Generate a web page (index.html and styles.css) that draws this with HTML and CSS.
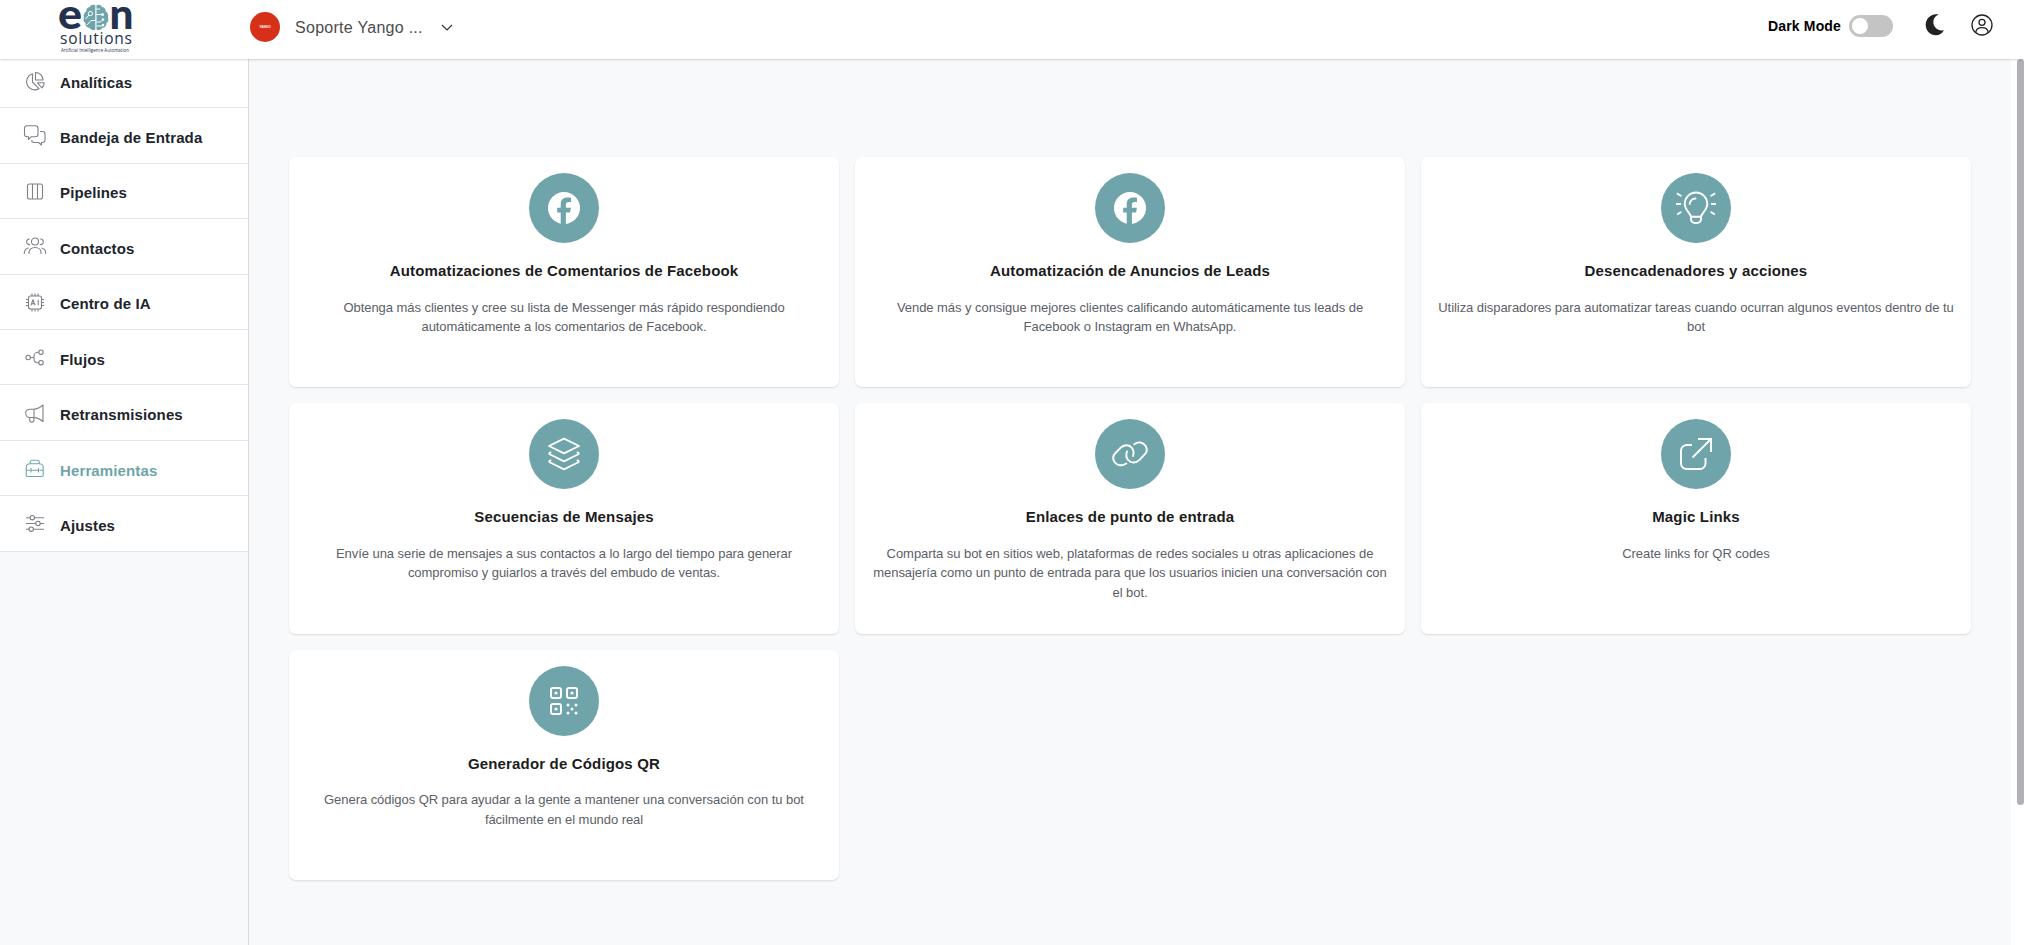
FILE: index.html
```html
<!DOCTYPE html>
<html lang="es">
<head>
<meta charset="utf-8">
<title>Herramientas</title>
<link rel="stylesheet" href="styles.css">
</head>
<body>
<div class="app">
  <header class="topbar">
    <div class="brand">
      <svg class="logo" viewBox="0 0 78 58">
        <text class="logo-name" x="0" y="29" textLength="24" lengthAdjust="spacingAndGlyphs">e</text>
        <text class="logo-name" x="51.500" y="29" textLength="24" lengthAdjust="spacingAndGlyphs">n</text>
        <g transform="translate(25 4)"><path d="M12.300 1.200C10 .2 7.500 1 6.800 3 4.300 3.200 3 5.200 3.300 7.200 1 8.500.2 11 1 13c-1 2.500-.5 5 1.500 6.300C2.300 22 4.300 24 6.800 24c1.200 2.200 3.700 2.500 5.500 1.500zM13.500 1.200C15.800.2 18.200 1 19 3c2.500.2 3.900 2.200 3.600 4.200 2.200 1.300 3.200 3.800 2.300 5.800 1 2.500.6 5-1.500 6.300.2 2.700-1.800 4.700-4.300 4.700-1.200 2.200-3.800 2.500-5.600 1.500z" fill="#6fa4aa"/><g fill="none" stroke="#fff" stroke-width="1"><circle cx="7.500" cy="9.500" r="2.100"/><path d="M6 11l-3.500 4M12.500 16.500H8L4 21M13.500 10.500h5M13.500 5H17M13.500 18h4l2-2M13.500 22h6"/></g><g fill="#fff"><circle cx="19.500" cy="10.500" r="1.500"/><circle cx="20" cy="15.500" r="1.300"/><circle cx="20" cy="21" r="1.300"/></g></g>
        <text class="logo-sub" x="2" y="43.500" textLength="72">solutions</text>
        <text class="logo-tag" x="3" y="52" textLength="68">Artificial Intelligence Automation</text>
      </svg>
    </div>
    <div class="account">
      <span class="avatar">YANGO</span>
      <span class="account-name">Soporte Yango ...</span>
      <svg class="chev" viewBox="0 0 12 7"><path d="M1 1l5 5 5-5" fill="none" stroke="#333" stroke-width="1.200"/></svg>
    </div>
    <div class="actions">
      <span class="dark-label">Dark Mode</span>
      <span class="switch"><span class="knob"></span></span>
      <svg class="moon" viewBox="0 0 20 22"><path d="M13.800.5C8 2.500 7 9 10 13c2 2.800 5.300 4 9 3.200C17 19.500 14 21.200 11 21.200 5.200 21.200.7 16.700.7 11S5 .5 11 .3c1 0 2 0 2.800.2z" fill="#222"/></svg>
      <svg class="user" viewBox="0 0 22 22" fill="none" stroke="#222" stroke-width="1.300"><circle cx="11" cy="11" r="10"/><circle cx="11" cy="8.300" r="3"/><path d="M4.800 18.500c.3-3 2.500-4.800 6.200-4.800s5.900 1.800 6.200 4.800"/></svg>
    </div>
  </header>
  <div class="body">
    <nav class="sidebar">
      <a class="item"><svg viewBox="0 0 24 24"><path d="M9.500 3.800A8.200 8.200 0 1 0 16 18.700L9.500 12zM12.500 2.500v7.500H20a7.600 7.600 0 0 0-7.500-7.500zM14.500 12.800h6.700c-.1 2-.9 3.900-2.300 5.200z"/></svg><span>Analíticas</span></a>
      <a class="item"><svg viewBox="0 0 24 24"><path d="M4 1.700h8.500a2.500 2.500 0 0 1 2.500 2.500v6a2.500 2.500 0 0 1-2.500 2.500H8.300L5.500 15.500v-2.800H4a2.500 2.500 0 0 1-2.500-2.500v-6A2.500 2.500 0 0 1 4 1.700zM17 7.500h2.500A2.500 2.500 0 0 1 22 10v6a2.500 2.500 0 0 1-2.500 2.500h-1v2.500l-3-2.500H11A2.500 2.500 0 0 1 8.700 16"/></svg><span>Bandeja de Entrada</span></a>
      <a class="item"><svg viewBox="0 0 24 24"><rect x="4.500" y="4" width="15" height="15" rx="2"/><path d="M9.500 4v15M14.500 4v15"/></svg><span>Pipelines</span></a>
      <a class="item"><svg viewBox="0 0 24 24"><circle cx="12" cy="6.500" r="3.500"/><path d="M6 19v-1.500c0-3 2.500-5 6-5s6 2 6 5V19M6.800 4a2.800 2.800 0 1 0 .3 5.500M17.200 4a2.800 2.800 0 1 1-.3 5.500M1.200 19c0-3 1.300-5.500 4.300-6M22.800 19c0-3-1.300-5.500-4.300-6"/></svg><span>Contactos</span></a>
      <a class="item"><svg viewBox="0 0 24 24"><g transform="translate(.5 0)"><rect x="5" y="5" width="13" height="13" rx="2"/><path d="M8.500 2.500V5M11.500 2.500V5M14.500 2.500V5M8.500 18v2.500M11.500 18v2.500M14.500 18v2.500M2.500 8.500H5M2.500 11.500H5M2.500 14.500H5M18 8.500h2.500M18 11.500h2.500M18 14.500h2.500M7.500 14.300l2-5.600 2 5.600M8.200 12.700h2.600M14.700 8.700v5.600"/></g></svg><span>Centro de IA</span></a>
      <a class="item"><svg viewBox="0 0 24 24"><g transform="translate(.5 0)"><circle cx="4.700" cy="11.500" r="2.200"/><circle cx="17.500" cy="6.200" r="2.200"/><circle cx="17.500" cy="16.700" r="2.200"/><path d="M7 11.500h3.500M15.300 6.200h-1a3.800 3.800 0 0 0-3.800 3.800v3a3.800 3.800 0 0 0 3.800 3.700h1"/></g></svg><span>Flujos</span></a>
      <a class="item"><svg viewBox="0 0 24 24"><g transform="translate(.5 0)"><path d="M19.500 3v16.500C16.500 17 13.500 15.600 10 15.500H6.300a4 4 0 0 1 0-8.300H10C13.500 7 16.500 5.800 19.500 3zM10.500 7.200v8.300M6.200 15.500V18a2.100 2.100 0 0 0 4.200 0v-2.500"/></g></svg><span>Retransmisiones</span></a>
      <a class="item active"><svg viewBox="0 0 24 24"><g transform="translate(.5 0)"><path d="M2.700 18V10.500C2.700 8.200 4.500 6.700 6.500 6.700h9.300c2 0 3.900 1.500 3.900 3.800V18a1.500 1.500 0 0 1-1.500 1.500H4.200A1.500 1.500 0 0 1 2.700 18zM6.700 6.700V5.200A2 2 0 0 1 8.700 3.200h5.100a2 2 0 0 1 2 2v1.500M2.700 13.200h4M8 13.200h6.500M16 13.200h3.700M7.500 11v4.500M15 11v4.500"/></g></svg><span>Herramientas</span></a>
      <a class="item"><svg viewBox="0 0 24 24"><g transform="translate(.5 0)"><path d="M2.500 5.700h4M11 5.700h9.500M2.500 11.500h9.700M16.700 11.500h3.800M2.500 17.200h3M10 17.200h10.500"/><circle cx="8.800" cy="5.700" r="2.200"/><circle cx="14.500" cy="11.500" r="2.200"/><circle cx="7.700" cy="17.200" r="2.200"/></g></svg><span>Ajustes</span></a>
    </nav>
    <main class="content">
      <article class="card"><span class="disc"><svg viewBox="0 0 40 40"><circle cx="20" cy="20" r="16" fill="#fff"/><path d="M16.700 37V24.600h-3.500v-4.800h3.500v-3.500c0-4.600 2.400-6.900 6.600-6.900 1.500 0 2.700.1 3.700.3v4.200h-2.300c-2 0-2.800 1-2.800 2.900v3h5l-.8 4.800h-4.200V37z" fill="#6fa4aa"/></svg></span><h2>Automatizaciones de Comentarios de Facebook</h2><p>Obtenga más clientes y cree su lista de Messenger más rápido respondiendo automáticamente a los comentarios de Facebook.</p></article>
      <article class="card"><span class="disc"><svg viewBox="0 0 40 40"><circle cx="20" cy="20" r="16" fill="#fff"/><path d="M16.700 37V24.600h-3.500v-4.800h3.500v-3.500c0-4.600 2.400-6.900 6.600-6.900 1.500 0 2.700.1 3.700.3v4.200h-2.300c-2 0-2.800 1-2.800 2.900v3h5l-.8 4.800h-4.200V37z" fill="#6fa4aa"/></svg></span><h2>Automatización de Anuncios de Leads</h2><p>Vende más y consigue mejores clientes calificando automáticamente tus leads de Facebook o Instagram en WhatsApp.</p></article>
      <article class="card"><span class="disc"><svg viewBox="0 0 40 40" class="line"><path d="M15 28.800c0-3.200-6.300-6.500-6.300-13a11.300 11.300 0 0 1 22.600 0c0 6.500-6.300 9.800-6.300 13M15 28.800h10V31a4 4 0 0 1-4 4h-2a4 4 0 0 1-4-4zM13.700 16a6 6 0 0 1 5.800-5.500M1.500 5.800l3.200 2M.8 16h3.400M1.800 26l3-1.800M38.500 5.800l-3.200 2M39.200 16h-3.400M38.200 26l-3-1.800"/></svg></span><h2>Desencadenadores y acciones</h2><p>Utiliza disparadores para automatizar tareas cuando ocurran algunos eventos dentro de tu bot</p></article>
      <article class="card"><span class="disc"><svg viewBox="0 0 40 40" class="line"><path d="M20 4.700L35 12 20 19.300 5 12zM6.500 18.300c-1.500.7-1.700 1.500-.3 2.200L20 27.300l13.800-6.800c1.400-.7 1.200-1.500-.3-2.200M6.500 26.300c-1.500.7-1.700 1.500-.3 2.200L20 35.300l13.800-6.800c1.400-.7 1.200-1.500-.3-2.200"/></svg></span><h2>Secuencias de Mensajes</h2><p>Envíe una serie de mensajes a sus contactos a lo largo del tiempo para generar compromiso y guiarlos a través del embudo de ventas.</p></article>
      <article class="card"><span class="disc"><svg viewBox="0 0 40 40" class="line"><path d="M16.300 29.500C12 32.500 7 31.500 4.500 28c-2-3.200-1.500-6.500 1-9l5-5.200c3.500-3.300 8-3.500 11-.5 2 2.200 2.500 5.500 1.500 8.700M24.200 10.200c4-3 8.800-2 11.300 1.500 2 3.200 1.500 6.500-1 9l-5 5.200c-3.500 3.300-8 3.500-11 .5-2.200-2.200-2.700-5.500-1.500-8.900"/></svg></span><h2>Enlaces de punto de entrada</h2><p>Comparta su bot en sitios web, plataformas de redes sociales u otras aplicaciones de mensajería como un punto de entrada para que los usuarios inicien una conversación con el bot.</p></article>
      <article class="card"><span class="disc"><svg viewBox="0 0 40 40" class="line square"><path d="M16 11h-5a6 6 0 0 0-6 5v13.500a5.500 5.500 0 0 0 5.500 5.500H24a5.500 5.500 0 0 0 5.500-5.500V24M22 5h13v13M35 5L16.500 23.500"/></svg></span><h2>Magic Links</h2><p>Create links for QR codes</p></article>
      <article class="card"><span class="disc"><svg viewBox="0 0 40 40" class="line"><rect x="7" y="7" width="10" height="10" rx="2"/><rect x="23" y="7" width="10" height="10" rx="2"/><rect x="7" y="23" width="10" height="10" rx="2"/><g fill="#fff" stroke="none"><circle cx="12" cy="12" r="1.600"/><circle cx="28" cy="12" r="1.600"/><circle cx="12" cy="28" r="1.600"/><circle cx="24" cy="24" r="1.500"/><circle cx="32" cy="24" r="1.500"/><circle cx="28" cy="28" r="1.500"/><circle cx="24" cy="32" r="1.500"/><circle cx="32" cy="32" r="1.500"/></g></svg></span><h2>Generador de Códigos QR</h2><p>Genera códigos QR para ayudar a la gente a mantener una conversación con tu bot fácilmente en el mundo real</p></article>
    </main>
    <div class="scroll"><div class="thumb"></div></div>
  </div>
</div>
</body>
</html>
```
FILE: styles.css
```css
* { box-sizing: border-box; }
body {
  margin: 0;
  font-family: "Liberation Sans", Arial, sans-serif;
  background: #f8f9fb;
  overflow: hidden;
}
.app { display: flex; flex-direction: column; height: 945px; }
.topbar {
  display: flex;
  height: 59px;
  flex: none;
  background: #fff;
  box-shadow: 0 1px 2px rgba(0, 0, 0, .16);
  position: relative;
  z-index: 1;
}
.brand { width: 250px; padding-left: 58px; }
.logo { display: block; width: 78px; height: 58px; fill: #24324f; overflow: visible; }
.logo-name { font: 900 42px Lato, sans-serif; }
.logo-sub { font: 400 15.500px "Open Sans", sans-serif; }
.logo-tag { font: 400 4.400px "Open Sans", sans-serif; }
.account { display: flex; align-items: center; height: 54px; }
.avatar {
  display: grid;
  place-items: center;
  width: 30px;
  height: 30px;
  border-radius: 50%;
  background: #d63118;
  color: #fff;
  font-size: 3.200px;
  font-weight: 700;
}
.account-name { width: 146px; margin: 1px 0 0 15px; font-size: 16px; color: #4c4c4c; letter-spacing: .28px; }
.chev { width: 12px; height: 7px; }
.actions { display: flex; align-items: center; height: 52px; margin-left: auto; padding-right: 31px; }
.dark-label { font-size: 14px; font-weight: 700; margin-right: 8px; letter-spacing: .15px; }
.switch { width: 44px; height: 22px; padding: 3px; border-radius: 11px; background: #c4c4c4; }
.knob { display: block; width: 16px; height: 16px; border-radius: 50%; background: #fff; }
.moon { width: 20px; height: 22px; margin: 0 26px 3px 32px; }
.user { width: 22px; height: 22px; margin-bottom: 3px; }
.body { display: flex; flex: 1; min-height: 0; }
.sidebar { width: 249px; border-right: 1px solid #d9dbde; }
.item {
  display: flex;
  align-items: center;
  height: 55.450px;
  padding: 4px 0 0 23px;
  border-bottom: 1px solid #e6e8eb;
  background: #fff;
  color: #20242c;
  font-size: 15px;
  font-weight: 700;
  letter-spacing: .13px;
}
.item:first-child { height: 49.200px; padding: 0 0 1px 23px; }
.item svg {
  width: 24px;
  height: 24px;
  margin: 0 13px 2px 0;
  fill: none;
  stroke: #7d8188;
  stroke-width: 1.100;
  stroke-linejoin: round;
}
.item.active { color: #6fa4aa; }
.item.active svg { stroke: #6fa4aa; }
.content {
  display: grid;
  grid-template-columns: repeat(3, 550px);
  grid-auto-rows: 230.300px;
  gap: 16px;
  width: 1762px;
  padding: 98px 40px 0;
}
.card {
  display: flex;
  flex-direction: column;
  align-items: center;
  padding: 16px 16px 0;
  border-radius: 7px;
  background: #fff;
  box-shadow: 0 1px 2px rgba(0, 0, 0, .12);
  text-align: center;
}
.disc { display: grid; place-items: center; width: 70px; height: 70px; flex: none; border-radius: 50%; background: #6fa4aa; }
.disc svg { width: 40px; height: 40px; }
.line { fill: none; stroke: #fff; stroke-width: 1.900; stroke-linecap: round; stroke-linejoin: round; }
.square { stroke-linecap: butt; stroke-linejoin: miter; }
.card h2 { margin: 18px 0 0; font-size: 15px; line-height: 20px; color: #1c1c1c; letter-spacing: .16px; }
.card p { margin: 16.600px 0 0; font-size: 13px; line-height: 19.500px; color: #5c6068; letter-spacing: -.055px; }
.scroll { flex: 1; background: #fff; padding-left: 6px; }
.thumb { height: 746px; border-radius: 4px; background: #b0b0b6; }
```
